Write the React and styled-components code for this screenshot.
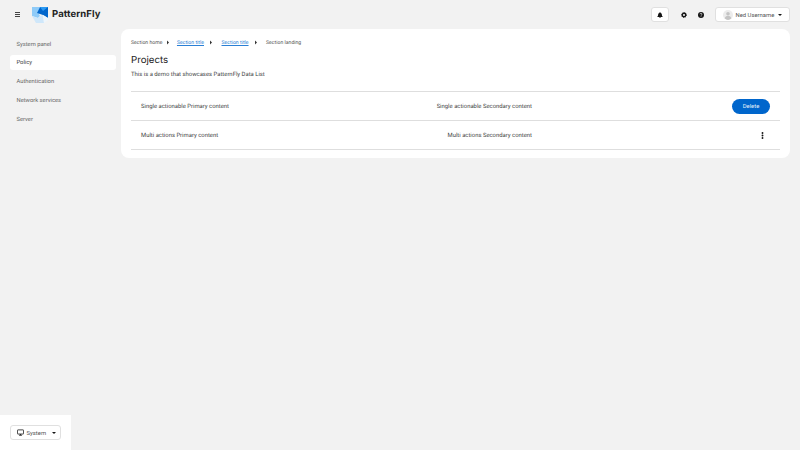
import React from "react";
import styled, { createGlobalStyle } from "styled-components";

const GlobalStyle = createGlobalStyle`
  html, body, #root { margin: 0; height: 100%; }
  body {
    background: #f2f2f2;
    color: #151515;
    font-family: Roboto, "Open Sans", "Liberation Sans", sans-serif;
    text-rendering: geometricPrecision;
  }
  * { box-sizing: border-box; }
`;

const navItems = ["System panel", "Policy", "Authentication", "Network services", "Server"];

const rows = [
  { primary: "Single actionable Primary content", secondary: "Single actionable Secondary content", action: "delete" },
  { primary: "Multi actions Primary content", secondary: "Multi actions Secondary content", action: "kebab" },
];

const Logo = () => (
  <svg width="16" height="16" viewBox="0 0 16 16">
    <polygon points="0,0 8,0 6,5 8,9 6,11 0,9" fill="#8fcbf8" />
    <polygon points="8,0 16,0 16,11 11,8 5,6" fill="#06c" />
    <polygon points="8,0 16,0 11,4" fill="#2b9af3" />
    <polygon points="0,9 6,11 8,9 11,8 12,16 4,16" fill="#cfe7fa" />
    <polygon points="11,8 16,11 16,13 12,16" fill="#eef6fc" />
  </svg>
);

const Bell = () => (
  <svg width="6" height="6" viewBox="0 0 16 16" fill="#151515">
    <path d="M8 0a1.2 1.2 0 0 0-1.2 1.2v.6A5 5 0 0 0 3 6.700c0 3.600-1.200 4.700-2 5.600-.3.4 0 1 .5 1h13c.5 0 .8-.6.5-1-.8-.9-2-2-2-5.600a5 5 0 0 0-3.800-4.900v-.6A1.200 1.200 0 0 0 8 0zM6 14.200a2 2 0 0 0 4 0z" />
  </svg>
);

const Gear = () => (
  <svg width="6" height="6" viewBox="0 0 16 16">
    <circle cx="8" cy="8" r="4.600" fill="none" stroke="#151515" strokeWidth="3.600" />
    <circle cx="8" cy="8" r="6.600" fill="none" stroke="#151515" strokeWidth="2.400" strokeDasharray="2.600 2.600" />
  </svg>
);

const Help = () => (
  <svg width="6" height="6" viewBox="0 0 16 16">
    <circle cx="8" cy="8" r="8" fill="#151515" />
    <path d="M5.400 6a2.600 2.400 0 1 1 3.800 2.100c-.8.5-1.200.9-1.200 1.700" fill="none" stroke="#fff" strokeWidth="1.800" />
    <circle cx="8" cy="12.400" r="1.100" fill="#fff" />
  </svg>
);

const Avatar = () => (
  <svg width="10" height="10" viewBox="0 0 20 20">
    <circle cx="10" cy="10" r="10" fill="#ececec" />
    <circle cx="10" cy="7.500" r="3.600" fill="#c4c4c4" />
    <path d="M3.500 17c.5-4 3-5.500 6.500-5.500s6 1.500 6.500 5.500a10 10 0 0 1-13 0z" fill="#c4c4c4" />
  </svg>
);

const Monitor = () => (
  <svg width="7" height="7" viewBox="0 0 16 16" fill="none" stroke="#151515">
    <rect x="1" y="2" width="14" height="9.500" rx="1" strokeWidth="1.800" />
    <path d="M4.500 14.300h7M8 11.500v2.800" strokeWidth="1.800" />
  </svg>
);

const KebabIcon = () => (
  <svg width="3" height="7" viewBox="0 0 3 7" fill="#151515">
    <circle cx="1.500" cy="1" r="0.950" />
    <circle cx="1.500" cy="3.500" r="0.950" />
    <circle cx="1.500" cy="6" r="0.950" />
  </svg>
);

const Page = styled.div`
  height: 100vh;
  display: flex;
  flex-direction: column;
  overflow: hidden;
  opacity: 0.999;
`;

const Masthead = styled.header`
  height: 29px;
  flex: none;
  display: flex;
  align-items: center;
  padding: 0 10px 0 15px;
`;

const Burger = styled.div`
  width: 5px;
  display: flex;
  flex-direction: column;
  gap: 1px;
  margin-right: 12px;
  span { height: 0.750px; background: #444; }
`;

const Brand = styled.div`
  display: flex;
  align-items: center;
  gap: 4px;
  font-family: Inter, sans-serif;
  font-size: 9.500px;
  font-weight: 700;
  letter-spacing: 0.100px;
  color: #222;
`;

const Tools = styled.div`
  margin-left: auto;
  display: flex;
  align-items: center;
`;

const ToolButton = styled.button`
  height: 15px;
  width: ${(p) => p.$width}px;
  margin-right: ${(p) => p.$gap || 0}px;
  padding: 0;
  display: flex;
  align-items: center;
  justify-content: center;
  background: ${(p) => (p.$plain ? "transparent" : "#fff")};
  border: ${(p) => (p.$plain ? "none" : "0.5px solid #e0e0e0")};
  border-radius: 3px;
`;

const UserButton = styled.button`
  width: 75px;
  height: 15px;
  padding: 0 0 0 6.500px;
  display: flex;
  align-items: center;
  gap: 3px;
  background: #fff;
  border: 0.5px solid #e0e0e0;
  border-radius: 3px;
  font: inherit;
  font-size: 5.900px;
  color: #555;
  white-space: nowrap;
`;

const Caret = styled.span`
  width: 0;
  height: 0;
  margin-left: ${(p) => p.$left || 0}px;
  border-left: 2px solid transparent;
  border-right: 2px solid transparent;
  border-top: 2px solid #151515;
`;

const Body = styled.div`
  flex: 1;
  min-height: 0;
  display: flex;
`;

const Sidebar = styled.aside`
  width: 121px;
  flex: none;
  display: flex;
  flex-direction: column;
`;

const Nav = styled.nav`
  flex: 1;
  padding: 7.500px 5px 0 10px;
  display: flex;
  flex-direction: column;
  gap: 3.750px;
`;

const NavItem = styled.div`
  height: 15px;
  display: flex;
  align-items: center;
  padding: 1px 0 0 6.500px;
  font-size: 5.800px;
  border-radius: 3px;
  color: ${(p) => (p.$active ? "#444" : "#666")};
  background: ${(p) => (p.$active ? "#fff" : "transparent")};
`;

const SideFooter = styled.div`
  width: 71px;
  height: 35px;
  flex: none;
  background: #fff;
  padding: 10px 10px 0;
`;

const ThemeSelect = styled.button`
  width: 51px;
  height: 15px;
  padding: 0 0 0 6px;
  display: flex;
  align-items: center;
  gap: 2.500px;
  background: #fff;
  border: 0.500px solid #e0e0e0;
  border-radius: 3px;
  font: inherit;
  font-size: 5.900px;
  color: #555;
`;

const Main = styled.main`
  flex: 1;
  min-width: 0;
  padding-right: 10px;
`;

const Card = styled.section`
  background: #fff;
  border-radius: 8px;
  padding: 10px 10px 8px;
`;

const Breadcrumb = styled.div`
  display: flex;
  align-items: center;
  height: 8px;
  font-size: 5.150px;
  color: #555;
`;

const Crumb = styled.span`
  color: ${(p) => (p.$link ? "#2a7fd5" : "#555")};
  text-decoration: ${(p) => (p.$link ? "underline" : "none")};
  text-decoration-thickness: 0.500px;
`;

const Chevron = styled.span`
  width: 0;
  height: 0;
  margin: ${(p) => (p.$first ? "0 7.500px 0 5px" : "0 9.500px 0 6px")};
  border-top: 2px solid transparent;
  border-bottom: 2px solid transparent;
  border-left: 2.500px solid #333;
  transform: translateY(-0.500px);
`;

const Title = styled.h1`
  margin: 6.500px 0 0;
  font-family: Inter, sans-serif;
  font-size: 9.700px;
  line-height: 14px;
  font-weight: 400;
  color: #222;
`;

const Lead = styled.p`
  margin: 2px 0 0;
  font-size: 5.900px;
  line-height: 10px;
  color: #444;
`;

const List = styled.div`
  margin-top: 11.500px;
  border-top: 1px solid #dedede;
`;

const Row = styled.div`
  height: 29px;
  display: grid;
  grid-template-columns: 1fr 1fr 238px;
  align-items: center;
  padding: 0 10px;
  border-bottom: 1px solid #dedede;
  font-size: 5.900px;
  color: #444;
`;

const Cell = styled.div`
  padding-top: 1.500px;
  text-align: ${(p) => (p.$right ? "right" : "left")};
`;

const Actions = styled.div`
  display: flex;
  justify-content: flex-end;
`;

const DeleteButton = styled.button`
  width: 38px;
  height: 15px;
  padding: 0.500px 0 0;
  border: none;
  border-radius: 8px;
  background: #06c;
  color: #e4effa;
  font: inherit;
  font-size: 5.900px;
`;

const KebabButton = styled.div`
  display: flex;
  margin-right: 6.500px;
`;

export default function App() {
  return (
    <Page>
      <GlobalStyle />
      <Masthead>
        <Burger><span /><span /><span /></Burger>
        <Brand><Logo />PatternFly</Brand>
        <Tools>
          <ToolButton $width={18} $gap={6.5}><Bell /></ToolButton>
          <ToolButton $width={17} $plain><Gear /></ToolButton>
          <ToolButton $width={17} $gap={5.5} $plain><Help /></ToolButton>
          <UserButton><Avatar />Ned Username<Caret $left={0.5} /></UserButton>
        </Tools>
      </Masthead>
      <Body>
        <Sidebar>
          <Nav>
            {navItems.map((item) => (
              <NavItem key={item} $active={item === "Policy"}>{item}</NavItem>
            ))}
          </Nav>
          <SideFooter>
            <ThemeSelect><Monitor />System<Caret $left={3} /></ThemeSelect>
          </SideFooter>
        </Sidebar>
        <Main>
          <Card>
            <Breadcrumb>
              <Crumb>Section home</Crumb><Chevron $first />
              <Crumb $link>Section title</Crumb><Chevron />
              <Crumb $link>Section title</Crumb><Chevron />
              <Crumb>Section landing</Crumb>
            </Breadcrumb>
            <Title>Projects</Title>
            <Lead>This is a demo that showcases PatternFly Data List</Lead>
            <List>
              {rows.map((row) => (
                <Row key={row.primary}>
                  <Cell>{row.primary}</Cell>
                  <Cell $right>{row.secondary}</Cell>
                  <Actions>
                    {row.action === "delete" ? (
                      <DeleteButton>Delete</DeleteButton>
                    ) : (
                      <KebabButton><KebabIcon /></KebabButton>
                    )}
                  </Actions>
                </Row>
              ))}
            </List>
          </Card>
        </Main>
      </Body>
    </Page>
  );
}
